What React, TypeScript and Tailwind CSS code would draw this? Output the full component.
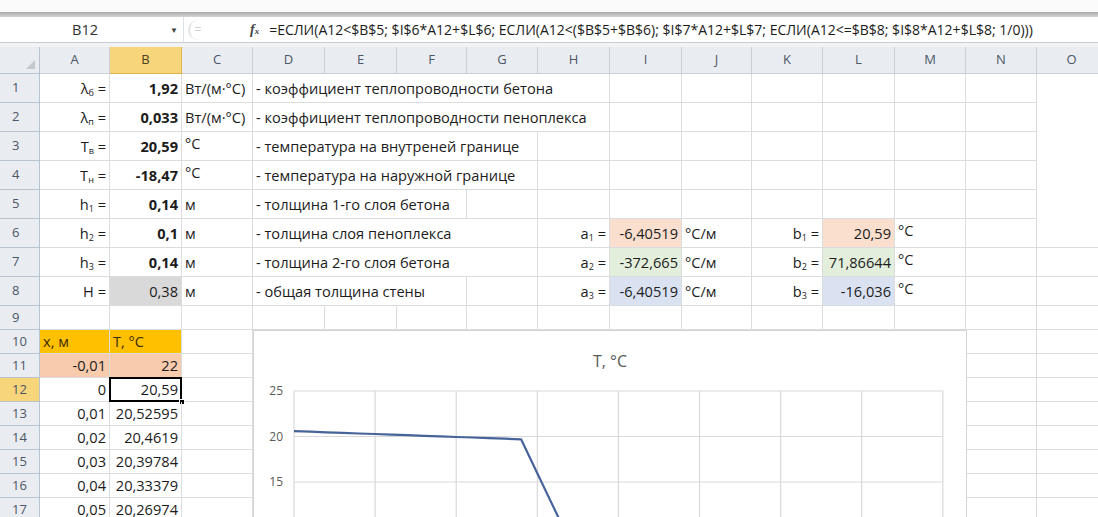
import React from "react";

const COLS =
  "grid grid-cols-[40px_70px_72px_71px_72px_72px_70px_71px_72px_72px_70px_71px_72px_71px_71px_70px]";
const LETTERS = ["A", "B", "C", "D", "E", "F", "G", "H", "I", "J", "K", "L", "M", "N", "O"];
const SPAN: Record<number, string> = { 1: "", 3: "col-span-3", 4: "col-span-4", 5: "col-span-5" };

const FORMULA =
  "=ЕСЛИ(A12<$B$5; $I$6*A12+$L$6; ЕСЛИ(A12<($B$5+$B$6); $I$7*A12+$L$7; ЕСЛИ(A12<=$B$8; $I$8*A12+$L$8; 1/0)))";

type CellProps = {
  children?: React.ReactNode;
  span?: number;
  align?: "left" | "right";
  bold?: boolean;
  top?: boolean;
  className?: string;
};

const Cell = ({ children, span = 1, align = "right", bold, top, className = "" }: CellProps) => (
  <div
    className={`${SPAN[span]} flex border-r border-b border-[#dadcdd] px-[3px] whitespace-nowrap text-[14.6px] leading-none text-[#1c1c1c] ${
      align === "right" ? "justify-end" : "justify-start"
    } ${top ? "items-start pt-[4px] text-[12.5px]" : "items-center"} ${bold ? "font-bold" : ""} ${className}`}
  >
    {children}
  </div>
);

const Sub = ({ children }: { children: React.ReactNode }) => (
  <span className="relative top-[4px] text-[9px]">{children}</span>
);

const RowHead = ({ n, active }: { n: number; active?: boolean }) => (
  <div
    className={`flex items-center pl-[12px] border-r border-b border-[#b9c2cf] text-[13px] text-[#4c5665] ${
      active ? "bg-[#f7d57a]" : "bg-[#e9edf2]"
    }`}
  >
    {n}
  </div>
);

const Empty = ({ count }: { count: number }) => (
  <>
    {Array.from({ length: count }).map((_, i) => (
      <Cell key={i} />
    ))}
  </>
);

// temperature profile through the three wall layers
const tempAt = (x: number) => {
  if (x < 0.14) return 20.59 - 6.40519 * x;
  if (x < 0.24) return 71.86644 - 372.665 * x;
  return -16.036 - 6.40519 * x;
};

const Chart = () => {
  const left = 40;
  const top = 60;
  const right = 689;
  const unit = 9.1;
  const step = 16.22;
  const pts = Array.from({ length: 39 }, (_, i) => {
    const t = tempAt(i * 0.01);
    return `${(left + i * step).toFixed(1)},${(top + (25 - t) * unit).toFixed(1)}`;
  }).join(" ");
  const vLines = Array.from({ length: 9 }, (_, i) => left + i * 81.1);
  const hLines = [25, 20, 15, 10, 5];
  return (
    <div className="absolute left-[253px] top-[330px] w-[714px] h-[230px] bg-white border border-[#d4d4d4]">
      <div className="absolute left-0 right-0 top-[18px] text-center text-[16px] text-[#595959]">T, °C</div>
      <svg width="714" height="230" className="absolute left-0 top-0">
        {vLines.map((x) => (
          <line key={x} x1={x} x2={x} y1={top} y2={230} stroke="#d9d9d9" strokeWidth="1.2" />
        ))}
        {hLines.map((v) => (
          <line
            key={v}
            x1={left}
            x2={right}
            y1={top + (25 - v) * unit}
            y2={top + (25 - v) * unit}
            stroke="#d9d9d9"
            strokeWidth="1.2"
          />
        ))}
        {hLines.slice(0, 3).map((v) => (
          <text
            key={`l${v}`}
            x={29}
            y={top + (25 - v) * unit + 4}
            textAnchor="end"
            fontSize="12"
            fill="#595959"
            fontFamily="Open Sans, sans-serif"
          >
            {v}
          </text>
        ))}
        <polyline points={pts} fill="none" stroke="#46639a" strokeWidth="2.2" strokeLinejoin="round" />
      </svg>
    </div>
  );
};

const tableRows: [string, string][] = [
  ["-0,01", "22"],
  ["0", "20,59"],
  ["0,01", "20,52595"],
  ["0,02", "20,4619"],
  ["0,03", "20,39784"],
  ["0,04", "20,33379"],
  ["0,05", "20,26974"],
];

export default function App() {
  return (
    <div className="relative w-[1098px] h-[517px] overflow-hidden bg-white font-['Open_Sans',sans-serif]">
      {/* ribbon edge */}
      <div className="h-[12px] bg-[#fbfbfb]" />
      <div className="h-[5px] bg-gradient-to-b from-[#a9a9a9] to-[#d6d6d6]" />

      {/* formula bar */}
      <div className="flex h-[26px] items-center border-b border-[#c5ccd6] bg-white">
        <div className="flex h-full w-[184px] items-center border-r border-[#dde2e8]">
          <span className="flex-1 text-center text-[14.6px] text-[#333]">B12</span>
          <span className="mr-[5px] text-[8px] text-[#444]">▼</span>
        </div>
        <div className="ml-[4px] flex h-[20px] w-[18px] items-center justify-center rounded-l-full border-l-2 border-[#e3e3e3] text-[12px] text-[#d0d0d0]">
          =
        </div>
        <span className="ml-[44px] font-['Liberation_Serif',serif] text-[14px] font-bold italic text-[#444]">
          f<span className="text-[9px]">x</span>
        </span>
        <span className="ml-[10px] whitespace-nowrap text-[14px] text-[#1c1c1c]">{FORMULA}</span>
      </div>
      <div className="h-[4px] bg-[#f2f3f5]" />

      {/* column headers */}
      <div className={`${COLS} h-[27px]`}>
        <div className="flex items-end justify-end border-r border-b border-[#b9c2cf] bg-[#e9edf2] p-[4px]">
          <svg width="9" height="9">
            <polygon points="9,0 9,9 0,9" fill="#c4c9d0" />
          </svg>
        </div>
        {LETTERS.map((l) => (
          <div
            key={l}
            className={`flex items-center justify-center border-r border-b text-[13px] ${
              l === "B"
                ? "border-[#e2b24a] bg-[#f7d57a] text-[#4c4020]"
                : "border-[#c9d0da] bg-[#e9edf2] text-[#4c5665]"
            }`}
          >
            {l}
          </div>
        ))}
      </div>

      {/* parameters block */}
      <div className={`${COLS} h-[29px]`}>
        <RowHead n={1} />
        <Cell>
          λ<Sub>б</Sub>&nbsp;=
        </Cell>
        <Cell bold>1,92</Cell>
        <Cell align="left">Вт/(м·°С)</Cell>
        <Cell span={5} align="left">
          - коэффициент теплопроводности бетона
        </Cell>
        <Empty count={6} />
      </div>
      <div className={`${COLS} h-[29px]`}>
        <RowHead n={2} />
        <Cell>
          λ<Sub>п</Sub>&nbsp;=
        </Cell>
        <Cell bold>0,033</Cell>
        <Cell align="left">Вт/(м·°С)</Cell>
        <Cell span={5} align="left">
          - коэффициент теплопроводности пеноплекса
        </Cell>
        <Empty count={6} />
      </div>
      <div className={`${COLS} h-[29px]`}>
        <RowHead n={3} />
        <Cell>
          Т<Sub>в</Sub>&nbsp;=
        </Cell>
        <Cell bold>20,59</Cell>
        <Cell align="left" top>
          °С
        </Cell>
        <Cell span={4} align="left">
          - температура на внутреней границе
        </Cell>
        <Empty count={7} />
      </div>
      <div className={`${COLS} h-[29px]`}>
        <RowHead n={4} />
        <Cell>
          Т<Sub>н</Sub>&nbsp;=
        </Cell>
        <Cell bold>-18,47</Cell>
        <Cell align="left" top>
          °С
        </Cell>
        <Cell span={4} align="left">
          - температура на наружной границе
        </Cell>
        <Empty count={7} />
      </div>
      <div className={`${COLS} h-[29px]`}>
        <RowHead n={5} />
        <Cell>
          h<Sub>1</Sub>&nbsp;=
        </Cell>
        <Cell bold>0,14</Cell>
        <Cell align="left">м</Cell>
        <Cell span={3} align="left">
          - толщина 1-го слоя бетона
        </Cell>
        <Empty count={8} />
      </div>
      <div className={`${COLS} h-[29px]`}>
        <RowHead n={6} />
        <Cell>
          h<Sub>2</Sub>&nbsp;=
        </Cell>
        <Cell bold>0,1</Cell>
        <Cell align="left">м</Cell>
        <Cell span={4} align="left">
          - толщина слоя пеноплекса
        </Cell>
        <Cell>
          a<Sub>1</Sub>&nbsp;=
        </Cell>
        <Cell className="bg-[#fadfce]">-6,40519</Cell>
        <Cell align="left">°С/м</Cell>
        <Cell>
          b<Sub>1</Sub>&nbsp;=
        </Cell>
        <Cell className="bg-[#fadfce]">20,59</Cell>
        <Cell align="left" top>
          °С
        </Cell>
        <Empty count={2} />
      </div>
      <div className={`${COLS} h-[29px]`}>
        <RowHead n={7} />
        <Cell>
          h<Sub>3</Sub>&nbsp;=
        </Cell>
        <Cell bold>0,14</Cell>
        <Cell align="left">м</Cell>
        <Cell span={4} align="left">
          - толщина 2-го слоя бетона
        </Cell>
        <Cell>
          a<Sub>2</Sub>&nbsp;=
        </Cell>
        <Cell className="bg-[#e3efdc]">-372,665</Cell>
        <Cell align="left">°С/м</Cell>
        <Cell>
          b<Sub>2</Sub>&nbsp;=
        </Cell>
        <Cell className="bg-[#e3efdc]">71,86644</Cell>
        <Cell align="left" top>
          °С
        </Cell>
        <Empty count={2} />
      </div>
      <div className={`${COLS} h-[29px]`}>
        <RowHead n={8} />
        <Cell>H&nbsp;=</Cell>
        <Cell className="bg-[#d9d9d9]">0,38</Cell>
        <Cell align="left">м</Cell>
        <Cell span={3} align="left">
          - общая толщина стены
        </Cell>
        <Cell />
        <Cell>
          a<Sub>3</Sub>&nbsp;=
        </Cell>
        <Cell className="bg-[#dae2f2]">-6,40519</Cell>
        <Cell align="left">°С/м</Cell>
        <Cell>
          b<Sub>3</Sub>&nbsp;=
        </Cell>
        <Cell className="bg-[#dae2f2]">-16,036</Cell>
        <Cell align="left" top>
          °С
        </Cell>
        <Empty count={2} />
      </div>
      <div className={`${COLS} h-[24px]`}>
        <RowHead n={9} />
        <Empty count={15} />
      </div>

      {/* x / T table */}
      <div className={`${COLS} h-[24px]`}>
        <RowHead n={10} />
        <Cell align="left" className="bg-[#ffc000] text-[#3d2b00]">
          x, м
        </Cell>
        <Cell align="left" className="bg-[#ffc000] text-[#3d2b00]">
          T, °C
        </Cell>
        <Empty count={13} />
      </div>
      {tableRows.map(([x, t], i) => {
        const n = 11 + i;
        return (
          <div key={n} className={`${COLS} h-[24px]`}>
            <RowHead n={n} active={n === 12} />
            <Cell className={n === 11 ? "bg-[#f8cbad]" : ""}>{x}</Cell>
            <Cell className={`relative ${n === 11 ? "bg-[#f8cbad]" : ""}`}>
              {t}
              {n === 12 && (
                <>
                  <span className="absolute -left-px -top-px -right-px -bottom-px border-2 border-black" />
                  <span className="absolute -right-[4px] -bottom-[4px] h-[6px] w-[6px] border border-white bg-black" />
                </>
              )}
            </Cell>
            <Empty count={13} />
          </div>
        );
      })}

      <Chart />
    </div>
  );
}
